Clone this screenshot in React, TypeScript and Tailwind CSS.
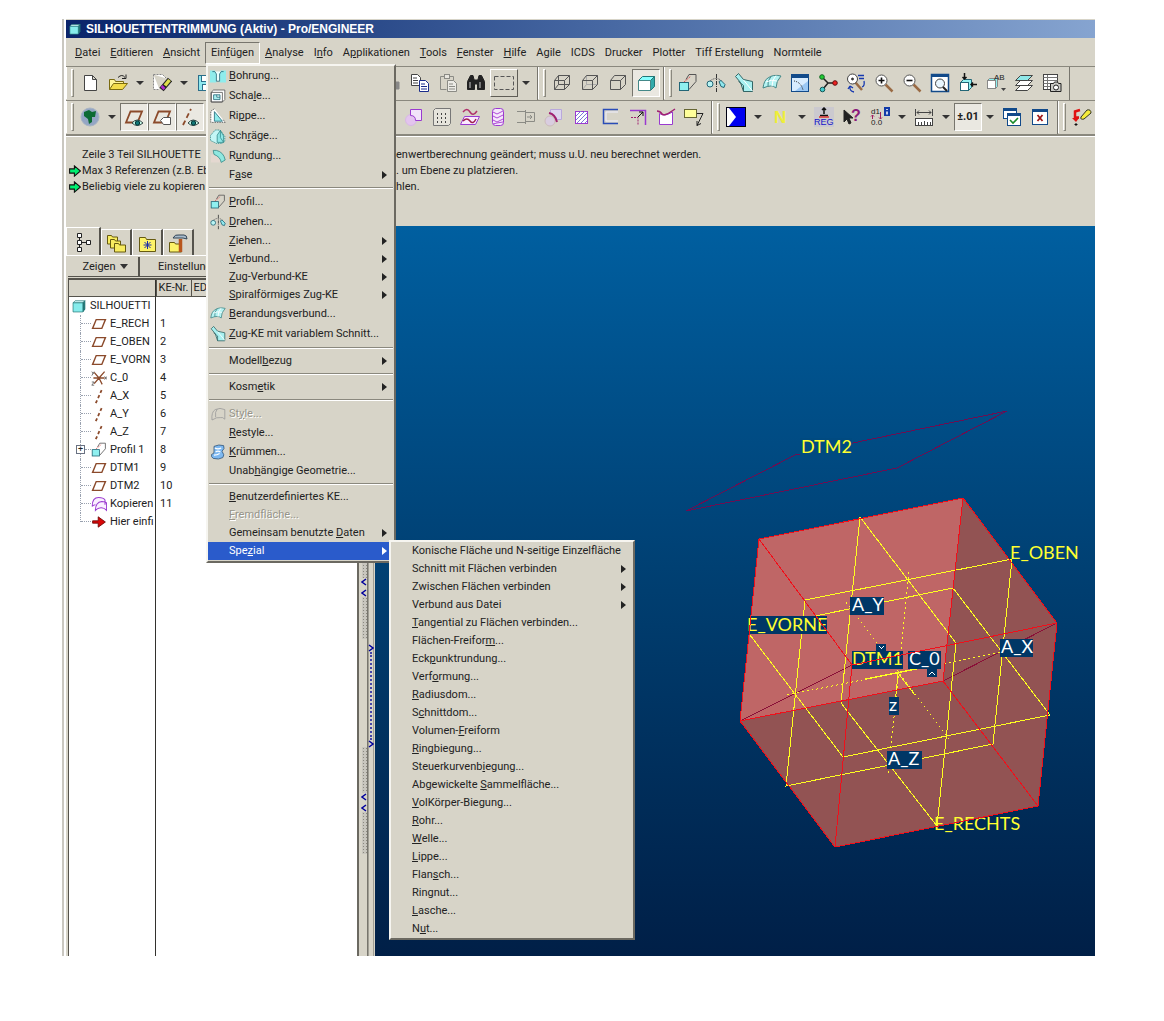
import React from "react";
import clsx from "clsx";

type IconProps = { size?: number; children: React.ReactNode };

function Svg({ size = 20, children }: IconProps) {
  return (
    <svg
      width={size}
      height={size}
      viewBox="0 0 20 20"
      fill="none"
      stroke="#444"
      strokeWidth="1"
      className="shrink-0"
      aria-hidden="true"
    >
      {children}
    </svg>
  );
}

const plane = <path d="M6.5 4.5H18L13.5 15.5H2Z" stroke="#8b4a2b" strokeWidth="1.8" />;
const eye = (
  <>
    <path d="M8 16q5-6 11 0q-6 5-11 0z" fill="#cfe" stroke="#344" />
    <circle cx="13.5" cy="16" r="2.2" fill="#177" stroke="#033" />
  </>
);
const lens = (
  <>
    <path d="M11.5 11.5L18.5 18.5" stroke="#9a6b45" strokeWidth="2.5" />
    <circle cx="7.5" cy="7.5" r="5.5" fill="#fff" stroke="#555" />
  </>
);

const icons: Record<string, React.ReactNode> = {
  file: <path d="M4.5 2.5h8l4 4v11h-12zM12.5 2.5v4h4" fill="#fff" />,
  open: (
    <>
      <path d="M1.5 16.5v-10h5l1 2h8v3" fill="#fff59a" stroke="#7a6a10" />
      <path d="M1.5 16.5l4-6h14l-5 6z" fill="#f3dc4b" stroke="#7a6a10" />
      <path d="M10 4.5q4-4 7 0M18 1.5v4h-4" stroke="#222" />
    </>
  ),
  erase: (
    <>
      <path d="M1.5 1.5h9l4 4M1.5 1.5v15h6" fill="#fff" stroke="#888" strokeDasharray="2 1" />
      <path d="M9.5 16.5L18 6.5" stroke="#222" strokeWidth="5.5" />
      <path d="M13 12.5L17.5 7" stroke="#dfe04a" strokeWidth="3.5" />
      <path d="M10 15.5L12 13.5" stroke="#b02bd0" strokeWidth="4" />
    </>
  ),
  save: (
    <>
      <rect x="2.5" y="2.5" width="15" height="15" fill="#8fe8ee" stroke="#2c6f8a" />
      <rect x="5.5" y="2.5" width="9" height="6" fill="#fff" stroke="#2c6f8a" />
      <rect x="6.5" y="11.5" width="8" height="6" fill="#fff" stroke="#2c6f8a" />
    </>
  ),
  undo: <path d="M17 9v7h-7l3-2L9 9z" fill="#888" stroke="#888" />,
  copy: (
    <>
      <path d="M1.5 1.5h6l3 3v8h-9z" fill="#fff" />
      <path d="M3 5h4M3 7.5h5M3 10h5" />
      <path d="M9.5 7.5h6l3 3v8h-9z" fill="#fff" stroke="#1a2c8a" />
      <path d="M11 11h4M11 13.5h6M11 16h6" stroke="#1a2c8a" />
    </>
  ),
  paste: (
    <g stroke="#8b8b85">
      <path d="M2.5 3.5h13v4M2.5 3.5v13h6" />
      <rect x="6.5" y="1.5" width="5" height="4" fill="#e8e6df" />
      <path d="M9.5 7.5h6l3 3v8h-9z" fill="#ecebe6" />
      <path d="M11 11h4M11 13.5h6M11 16h6" />
    </g>
  ),
  find: (
    <g fill="#222" stroke="#222">
      <path d="M4.5 2.5h2.5l1.5 6v8h-7v-8zM13 2.5h2.5l3 6v8h-7v-8z" />
      <path d="M8 7h4v4h-4z" />
      <path d="M4 9v6M14 9v6" stroke="#ccc" />
    </g>
  ),
  select: <rect x="0.5" y="3.5" width="19" height="13" strokeDasharray="4 2" stroke="#555" />,
  wire: (
    <>
      <path d="M2.5 7.5h10v9h-10zM2.5 7.5l4-5h11v9l-5 5M12.5 7.5l5-5" stroke="#555" />
      <path d="M6.5 2.5v9h11M6.5 11.5l-4 5" stroke="#555" />
    </>
  ),
  hidden: (
    <>
      <path d="M6.5 2.5v9h11M6.5 11.5l-4 5" stroke="#aaa" />
      <path d="M2.5 7.5h10v9h-10zM2.5 7.5l4-5h11v9l-5 5M12.5 7.5l5-5" stroke="#555" />
    </>
  ),
  nohidden: (
    <path d="M2.5 7.5h10v9h-10zM2.5 7.5l4-5h11v9l-5 5M12.5 7.5l5-5" stroke="#555" />
  ),
  shaded: (
    <>
      <path d="M2.5 7.5l4-4h12l-4 4z" fill="#8ff" stroke="#277" />
      <path d="M14.5 7.5l4-4v10l-4 4z" fill="#3aa" stroke="#277" />
      <path d="M2.5 7.5h12v10h-12z" fill="#fff" stroke="#488" />
    </>
  ),
  extrude: (
    <>
      <path d="M8 6.5l3-5h7v7l-7 8" stroke="#555" />
      <path d="M6 9L13 3" stroke="#d55" strokeDasharray="2 1" />
      <rect x="1.5" y="9.5" width="9" height="8" fill="#8ff0f0" stroke="#267" />
    </>
  ),
  revolve: (
    <>
      <path d="M10.5 1v18" stroke="#333" strokeDasharray="4 1 1 1" />
      <path d="M4 8q6-5 12 0" stroke="#666" strokeDasharray="2 1" />
      <circle cx="4" cy="11" r="3" fill="#b8f4f4" stroke="#267" />
      <path d="M13 8.5l2-1l4 4l-1 3l-3-1z" fill="#8fe8ee" stroke="#267" />
    </>
  ),
  sweep: (
    <>
      <path d="M1.5 3.5l3-3l5 6l9 2v10h-9l-3-9z" fill="#a8f0f0" stroke="#366" />
      <path d="M9.5 18.5v-6l-5-4" stroke="#366" />
      <path d="M9.5 7l9 11" stroke="#fff" />
    </>
  ),
  blend: (
    <>
      <path d="M1 15q1-8 5-10q5-4 13-2q-5 5-5 12q-4-4-13 0z" fill="#b4f3f3" stroke="#488" />
      <path d="M9 3.5q-4 4-3 10" stroke="#488" />
      <path d="M4 9q5-3 11-1M14 2.5q-4 4-4 11" stroke="#fff" />
    </>
  ),
  sketch: (
    <>
      <rect x="1.5" y="1.5" width="17" height="17" fill="#d8ecff" stroke="#124a8a" />
      <rect x="1.5" y="1.5" width="17" height="3" fill="#124a8a" stroke="#124a8a" />
      <path d="M5 18L18 8v10z" fill="#9cc8f4" stroke="none" />
      <path d="M4 8q7 1 9 9" stroke="#222" strokeDasharray="1 1" />
    </>
  ),
  points: (
    <>
      <path d="M4 4l6 6h7M10 10l-5 6" stroke="#222" strokeWidth="1.5" />
      <circle cx="4" cy="4" r="2.3" fill="#2c3" stroke="#162" />
      <circle cx="17" cy="10" r="2.3" fill="#e22" stroke="#611" />
      <circle cx="4.5" cy="16.5" r="2.3" fill="#4cc" stroke="#155" />
    </>
  ),
  spin: (
    <>
      <path d="M9 9l7 8" stroke="#9a6b45" strokeWidth="2.5" />
      <circle cx="6.5" cy="6" r="5" fill="#fff" />
      <circle cx="6.5" cy="6" r="1" fill="#222" />
      <path
        d="M12 2.5h6M13 5.5h5M18 8q1 5-2 6M4 13q-1 5 4 6M4 13l-2 3M4 13l3 2"
        stroke="#1638b0"
        strokeWidth="1.3"
      />
    </>
  ),
  zoomIn: (
    <>
      {lens}
      <path d="M4.5 7.5h6M7.5 4.5v6" stroke="#111" strokeWidth="1.6" />
    </>
  ),
  zoomOut: (
    <>
      {lens}
      <path d="M4.5 7.5h6" stroke="#111" strokeWidth="1.6" />
    </>
  ),
  refit: (
    <>
      <rect x="1.5" y="1.5" width="17" height="17" fill="#fff" stroke="#124a8a" strokeWidth="1.5" />
      <path d="M1 3h18" stroke="#124a8a" strokeWidth="2" />
      <circle cx="10" cy="10.5" r="4.5" fill="#e8f6ff" />
      <path d="M13 14l4 4" stroke="#222" strokeWidth="2" />
    </>
  ),
  orient: (
    <>
      <path d="M2.5 9.5l3-3h8v8l-3 3h-8z" fill="#8ff0f0" stroke="#267" />
      <rect x="2.5" y="9.5" width="8" height="8" fill="#fff" stroke="#267" />
      <path d="M6.5 0v6M4.5 4l2 2l2-2M19 11.5h-6M15 9.5l-2 2l2 2" stroke="#111" strokeWidth="1.5" />
    </>
  ),
  views: (
    <>
      <path d="M1.5 7.5l2-2h8v8l-2 2h-8z" fill="#8ff0f0" stroke="#888" />
      <rect x="1.5" y="7.5" width="8" height="8" fill="#fff" stroke="#888" />
      <path d="M15 15h5l-2.5 3z" fill="#444" stroke="none" />
      <text x="8" y="7" fontSize="8" fontFamily="Liberation Sans, sans-serif" fill="#222" stroke="none">
        AB
      </text>
    </>
  ),
  layers: (
    <>
      <path d="M1.5 17.5l5-5h12l-5 5zM1.5 12.5l5-5h12l-5 5z" fill="#fff" />
      <path d="M1.5 7.5l5-5h12l-5 5z" fill="#8fe8e8" />
    </>
  ),
  manager: (
    <>
      <rect x="1.5" y="1.5" width="14" height="15" fill="#fff" />
      <path d="M1.5 4.5h14M1.5 7.5h14M1.5 10.5h14M1.5 13.5h14M5.5 2v14" stroke="#777" />
      <path d="M8.5 10.5h3l1-1.5h3l1 1.5h2.5v8h-10.5z" fill="#c8c8c4" stroke="#222" />
      <circle cx="14" cy="14.5" r="2.5" fill="#fff" stroke="#222" />
    </>
  ),
  globe: (
    <>
      <circle cx="10" cy="10" r="9" fill="#94a6c4" stroke="#a8b4c4" />
      <path d="M4 5l5-2l3 2l4-1l-1 6l-3 0l0 5l-3 2l-1-5l-4-3z" fill="#0c6b34" stroke="none" />
    </>
  ),
  planeOn: (
    <>
      {plane}
      {eye}
    </>
  ),
  planeTag: (
    <>
      {plane}
      <path d="M8.5 13.5l3-3h7v7h-7z" fill="#fff" stroke="#555" />
    </>
  ),
  axisOn: (
    <>
      <path d="M3 18L11 2" stroke="#8b4a2b" strokeWidth="1.8" strokeDasharray="5 3" />
      {eye}
    </>
  ),
  round: (
    <>
      <circle cx="7" cy="13" r="5.5" fill="#e3c4ee" stroke="#d8b8e4" />
      <path d="M6.5 2.5h11v11h-6q0-5-5-5z" fill="#f2e4fa" stroke="#9a3ad0" />
    </>
  ),
  pattern: (
    <>
      <path d="M1.5 3.5l2-2h15v15l-2 2h-15z" fill="#e6e4dc" stroke="#777" />
      <path d="M5 7h1M9 7h1M13 7h1M5 11h1M9 11h1M13 11h1M5 15h1M9 15h1M13 15h1" strokeWidth="2" />
    </>
  ),
  offset: (
    <>
      <path d="M3 5q4-5 7 0t7-1" stroke="#b0306a" strokeWidth="1.5" />
      <path d="M0.5 17.5l4-8h15l-4 8z" fill="#fbeaff" stroke="#9a3ad0" />
      <path d="M3 14q4-4 7 0t6-2" stroke="#a02050" strokeWidth="1.5" />
    </>
  ),
  coil: (
    <>
      <rect x="4.5" y="1.5" width="11" height="17" rx="3" fill="#f5e6fb" stroke="#9a3ad0" />
      <path d="M5 5l4 2l6-3M5 9l4 2l6-3M5 13l4 2l6-3M5 17l4-1l6-1" stroke="#b04ad8" />
    </>
  ),
  extend: (
    <g stroke="#8b8b85">
      <path d="M1 4.5h8M1 15.5h8M9.5 3v14M9.5 5.5h9v9h-9M11 10h5M14 8l2 2l-2 2" />
    </g>
  ),
  trimRound: (
    <>
      <circle cx="6" cy="14" r="5" fill="#d9cde0" stroke="#cbb" />
      <path d="M6.5 2.5h11v10h-5q0-4-6-5z" fill="#dcd6ee" stroke="#b9a8dc" />
      <path d="M5 6q6 1 8 9" stroke="#a02070" strokeWidth="2" />
    </>
  ),
  hatch: (
    <>
      <rect x="3.5" y="4.5" width="12" height="12" fill="#fff" stroke="#9a3ad0" />
      <path d="M4 9l5-5M4 13l9-9M5 16L15 6M9 16l6-6M13 16l2-2" stroke="#7a7ad8" />
    </>
  ),
  bracket: (
    <>
      <path d="M18 2.5H3.5v14H18" stroke="#2a4cb8" strokeWidth="1.5" />
      <path d="M18 5H6v9h12" stroke="#eef" />
    </>
  ),
  corner: (
    <>
      <path d="M2 3.5h15.5V18" stroke="#9a3ad0" strokeWidth="1.5" />
      <path d="M3 10.5h7v7" strokeDasharray="2 1" stroke="#a02070" />
      <path d="M10 10l5-5M15 9V5h-4" stroke="#111" />
    </>
  ),
  curveBox: (
    <>
      <path d="M3.5 6.5v11h13V5q-5 3-8 3t-5-1.5" stroke="#9a3ad0" fill="#fff" />
      <path d="M1 4q3 0 5 3t13-5" stroke="#a02070" strokeWidth="1.5" />
    </>
  ),
  note: (
    <>
      <rect x="0.5" y="2.5" width="12" height="8" fill="#ffff9a" stroke="#663" />
      <path d="M13 6.5h6l-6 12M13 14v4.5l4-2" stroke="#222" />
    </>
  ),
  flag: (
    <>
      <rect x="0.5" y="0.5" width="19" height="19" fill="#0000f0" stroke="#001" />
      <path d="M1 1h2l7 9l-7 9h-2z" fill="#fff" stroke="none" />
    </>
  ),
  nmark: (
    <text
      x="4"
      y="16"
      fontSize="17"
      fontWeight="bold"
      fontFamily="Liberation Sans, sans-serif"
      fill="#eeee3a"
      stroke="none"
    >
      N
    </text>
  ),
  reg: (
    <>
      <rect width="20" height="20" fill="#cbc9cf" stroke="none" />
      <path d="M10 1v6M8 3l2-2l2 2M6 8.5h8" stroke="#111" strokeWidth="1.5" />
      <path d="M5 10h10" stroke="#d33" strokeWidth="1.5" />
      <text x="0" y="18" fontSize="9" fontFamily="Liberation Sans, sans-serif" fill="#1414c8" stroke="none">
        REG
      </text>
    </>
  ),
  help: (
    <>
      <path d="M2 3v12l3-3l2 5l2-1l-2-5h4z" fill="#222" stroke="#222" />
      <text
        x="9"
        y="14"
        fontSize="16"
        fontWeight="bold"
        fontFamily="Liberation Sans, sans-serif"
        fill="#8a1a7a"
        stroke="none"
      >
        ?
      </text>
    </>
  ),
  dims: (
    <>
      <g fontSize="8" fontFamily="Liberation Sans, sans-serif" fill="#222" stroke="none">
        <text x="1" y="7">d1</text>
        <text x="1" y="18">0.0</text>
      </g>
      <path d="M2.5 12V8M1 9.5l1.5-1.5l1.5 1.5M10.5 5v7M9 10.5l1.5 1.5l1.5-1.5" stroke="#a02060" />
      <rect x="14" y="0" width="6" height="9" fill="#123aa8" stroke="none" />
      <path d="M17 2v1M17 4.5v3" stroke="#fff" strokeWidth="1.5" />
    </>
  ),
  measure: (
    <>
      <path d="M1.5 2v7M18.5 2v7M3 5.5h14M5 3.5l-2 2l2 2M15 3.5l2 2l-2 2" />
      <rect x="1.5" y="11.5" width="17" height="7" fill="#fff" />
      <path d="M4.5 18v-3M7.5 18v-3M10.5 18v-4M13.5 18v-3M16.5 18v-3" />
    </>
  ),
  winOk: (
    <>
      <rect x="1.5" y="1.5" width="13" height="10" fill="#fff" stroke="#124a8a" />
      <path d="M1 3h14" stroke="#124a8a" strokeWidth="2" />
      <rect x="5.5" y="6.5" width="13" height="12" fill="#fff" stroke="#124a8a" />
      <path d="M5 8h14" stroke="#124a8a" strokeWidth="2" />
      <path d="M8 13l3 3l5-5" stroke="#1a8a2a" strokeWidth="1.6" />
    </>
  ),
  winX: (
    <>
      <rect x="2.5" y="2.5" width="15" height="15" fill="#fff" stroke="#124a8a" />
      <path d="M2 4h16" stroke="#124a8a" strokeWidth="2" />
      <path d="M7.5 8l5 6M12.5 8l-5 6" stroke="#a01818" strokeWidth="1.8" />
    </>
  ),
  redline: (
    <>
      <path d="M8 3L3 4.5v6h4" stroke="#e01010" strokeWidth="2.5" />
      <path d="M0 11h7l-3 4z" fill="#e01010" stroke="none" />
      <path d="M4 16v3M2.5 17.5h3" stroke="#111" />
      <path d="M9 10l6-7q4-1 4 3l-7 6q-4 1-3-2z" fill="#f6ec3a" stroke="#332" />
    </>
  ),
  // menu only
  hole: (
    <>
      <path d="M0 3h6l2 3v12H0zM20 3h-6l-2 3v12h8z" fill="#8fecec" stroke="none" />
      <path d="M3 4.5h3l2 3v9h4v-9l2-3h3" stroke="#267" fill="#e8ffff" />
    </>
  ),
  shell: (
    <>
      <path d="M1.5 5.5l3-3h14v12l-3 3h-14z" fill="#fff" stroke="#555" />
      <path d="M15.5 5.5h-14v12h14z" stroke="#555" />
      <path d="M4.5 8.5h8v6h-8zM8.5 8.5v3h4" fill="#a8f0f0" stroke="#267" />
    </>
  ),
  rib: (
    <>
      <path d="M5.5 1L1 4v14h18l-3-4" fill="#fff" stroke="#555" strokeDasharray="2 1" />
      <path d="M5.5 4.5l10 12h-10z" fill="#8fecec" stroke="#267" />
    </>
  ),
  draft: (
    <>
      <path d="M0.5 9.500l6-7h6l6 8v6l-4 3h-6l-8-4z" fill="#c4f6f6" stroke="#388" strokeDasharray="2 1" />
      <path d="M9 18V9l4-6l4 7v8z" fill="#8fe8e8" stroke="#388" />
      <path d="M13 3v9l4 6" stroke="#388" />
    </>
  ),
  fillet: (
    <>
      <path d="M1 8h5q6 2 7 10H1z" fill="#e4d8d0" stroke="none" />
      <path d="M4 3h4q9 2 11 12l-5 3q-1-7-9-10z" fill="#8fe8e0" stroke="#388" />
    </>
  ),
  style: <path d="M2.5 17.5q-1-10 4-13q6-3 12 0v12q-3-3-5-2q-5-1-11 3zM9 4q-3 3-2 10" stroke="#999" />,
  bend: (
    <>
      <path d="M5 3q6-3 12-1q2 4-2 7q4 5 1 8q-5 3-12 1q-3-2-2-5q4-1 3-4z" fill="#7db8f0" stroke="#357" />
      <path d="M6 5q4 2 8 0M7 10q3-2 6 0M5 14q4 0 7-2" stroke="#fff" strokeWidth="1.5" />
    </>
  ),
  // model tree
  part: (
    <>
      <path d="M1.5 5.5l3-3h14l-3 3z" fill="#dff" stroke="#277" />
      <path d="M15.5 5.5l3-3v12l-3 4z" fill="#277" stroke="#277" />
      <path d="M1.5 5.5h14v13h-14z" fill="#86ecec" stroke="#277" />
    </>
  ),
  plane: plane,
  csys: (
    <>
      <path
        d="M10 10L4 3M10 10l7-8M10 10h7M10 10l-6 7M10 10l4 8M10 10H3"
        stroke="#8b4a2b"
        strokeWidth="1.6"
      />
      <path d="M17 8l3 4M20 8l-3 4M1 2l2 3M4 2L1 7M1 15h3l-3 4h3" stroke="#555" />
    </>
  ),
  axis: <path d="M6 19L14 1" stroke="#8b4a2b" strokeWidth="2.2" strokeDasharray="4 3" />,
  quilt: (
    <path
      d="M1.5 13q0-11 8-11q6 0 8 3v6M5.5 18q0-10 8-11q5 0 6 2v9q-3-3-5-3q-5-1-9 3zM1.5 13q2-2 4-2"
      fill="#faf0ff"
      stroke="#9a3ad0"
      strokeWidth="1.3"
    />
  ),
  insert: <path d="M2 8.5h7v-5l9 6.5l-9 6.5v-5H2z" fill="#d80808" stroke="#600" />,
  // tabs
  tree: (
    <path
      d="M4.5 1.5h4v4h-4zM4.5 8.5h4v4h-4zM4.5 15.5h4v4h-4zM13.5 8.5h4v4h-4zM6.5 6v2M6.5 13v2M9 10.5h4"
      stroke="#222"
      fill="#fff"
    />
  ),
  folders: (
    <g fill="#f8ec60" stroke="#665a10">
      <path d="M1.5 2.5h4l1 1.5h5v7h-10z" />
      <path d="M4.5 6.5h4l1 1.5h5v7h-10z" />
      <path d="M8.5 10.5h4l1 1.5h6v7h-11z" />
    </g>
  ),
  favorites: (
    <>
      <path d="M2.5 4.5h6l1 2h9v12h-16z" fill="#fdf36a" stroke="#665a10" />
      <path d="M10.5 8v8M6.5 12h8M7.5 9l6 6M13.5 9l-6 6" stroke="#1a2ca8" />
    </>
  ),
  hammer: (
    <>
      <path d="M1.5 9.5h5l1 1.5h6v8h-12z" fill="#fdf36a" stroke="#665a10" />
      <path d="M12.5 6v13" stroke="#b8561c" strokeWidth="3.5" />
      <path d="M5 5q2-4 6-3h5q3 0 3 4l-4-1H6z" fill="#a9bccb" stroke="#345" />
    </>
  ),
  hint: <path d="M1 6.5h8V1.5l10 8.5l-10 8.5v-5H1z" fill="#00f070" stroke="#111" strokeWidth="1.8" />,
};

// "&" marks the underlined access key
function Label({ text }: { text: string }) {
  const i = text.indexOf("&");
  if (i < 0) return <>{text}</>;
  return (
    <>
      {text.slice(0, i)}
      <span className="underline underline-offset-1">{text[i + 1]}</span>
      {text.slice(i + 2)}
    </>
  );
}

type MenuEntry =
  | "-"
  | { label: string; icon?: string; sub?: boolean; disabled?: boolean; active?: boolean };

const menuBefore = ["&Datei", "&Editieren", "&Ansicht"];
const menuAfter = [
  "&Analyse",
  "I&nfo",
  "A&pplikationen",
  "&Tools",
  "&Fenster",
  "&Hilfe",
  "Agile",
  "ICDS",
  "Drucker",
  "Plotter",
  "Tiff Erstellung",
  "Normteile",
];

const insertMenu: MenuEntry[] = [
  { label: "&Bohrung...", icon: "hole" },
  { label: "Scha&le...", icon: "shell" },
  { label: "Ri&ppe...", icon: "rib" },
  { label: "Sch&räge...", icon: "draft" },
  { label: "R&undung...", icon: "fillet" },
  { label: "F&ase", sub: true },
  "-",
  { label: "&Profil...", icon: "extrude" },
  { label: "&Drehen...", icon: "revolve" },
  { label: "&Ziehen...", sub: true },
  { label: "&Verbund...", sub: true },
  { label: "&Zug-Verbund-KE", sub: true },
  { label: "&Spiralförmiges Zug-KE", sub: true },
  { label: "&Berandungsverbund...", icon: "blend" },
  { label: "&Zug-KE mit variablem Schnitt...", icon: "sweep" },
  "-",
  { label: "Modell&bezug", sub: true },
  "-",
  { label: "Kosm&etik", sub: true },
  "-",
  { label: "St&yle...", icon: "style", disabled: true },
  { label: "&Restyle..." },
  { label: "&Krümmen...", icon: "bend" },
  { label: "Unab&hängige Geometrie..." },
  "-",
  { label: "&Benutzerdefiniertes KE..." },
  { label: "&Fremdfläche...", disabled: true },
  { label: "Gemeinsam benutzte &Daten", sub: true },
  { label: "Spe&zial", sub: true, active: true },
];

const specialMenu: MenuEntry[] = [
  { label: "Konische Fläche und N-seitige Einzelfläche" },
  { label: "Schnitt mit Flächen verbinden", sub: true },
  { label: "Zwischen Flächen verbinden", sub: true },
  { label: "Verbund aus Datei", sub: true },
  { label: "&Tangential zu Flächen verbinden..." },
  { label: "Flächen-Freifor&m..." },
  { label: "Eck&punktrundung..." },
  { label: "Verf&ormung..." },
  { label: "&Radiusdom..." },
  { label: "S&chnittdom..." },
  { label: "Volumen-&Freiform" },
  { label: "&Ringbiegung..." },
  { label: "Steuerkurvenb&iegung..." },
  { label: "Abgewickelte &Sammelfläche..." },
  { label: "&VolKörper-Biegung..." },
  { label: "&Rohr..." },
  { label: "&Welle..." },
  { label: "&Lippe..." },
  { label: "Flan&sch..." },
  { label: "Ringnut..." },
  { label: "&Lasche..." },
  { label: "N&ut..." },
];

type MenuProps = { items: MenuEntry[]; className: string; children?: React.ReactNode };

function Menu({ items, className, children }: MenuProps) {
  return (
    <ul
      className={clsx(
        "absolute border-2 border-t-[#f6f5f0] border-r-[#6b6961] border-b-[#6b6961] border-l-[#f6f5f0] bg-[#d7d4c8]",
        className
      )}
    >
      {items.map((item, i) =>
        item === "-" ? (
          <li key={i} className="flex h-2 items-center px-px">
            <hr className="h-[2px] w-full border-t border-b border-t-[#8a887e] border-b-white" />
          </li>
        ) : (
          <li key={i} className="relative">
            <button
              type="button"
              disabled={item.disabled}
              className={clsx(
                "flex w-full items-center pr-[7px] pl-[2px] text-left",
                item.icon ? "h-5" : "h-[18px]",
                item.active && "bg-[#2a5bcb] text-white",
                item.disabled && "text-[#96948a] [text-shadow:1px_1px_0_#fff]"
              )}
            >
              <span className="mr-[3px] w-4 shrink-0">
                {item.icon && <Svg size={16}>{icons[item.icon]}</Svg>}
              </span>
              <span className="flex-1 whitespace-nowrap">
                <Label text={item.label} />
              </span>
              {item.sub && (
                <span className="border-y-4 border-l-[5px] border-y-transparent border-l-current" />
              )}
            </button>
            {item.active && children}
          </li>
        )
      )}
    </ul>
  );
}

function Tool({ name, label, look }: { name: string; label: string; look?: "pressed" | "raised" }) {
  return (
    <button
      type="button"
      aria-label={label}
      className={clsx(
        "flex h-7 w-7 shrink-0 items-center justify-center",
        look === "pressed" &&
          "border border-t-[#77756d] border-r-white border-b-white border-l-[#77756d] bg-[#eae8e1]",
        look === "raised" &&
          "border border-t-white border-r-[#5f5d56] border-b-[#5f5d56] border-l-white"
      )}
    >
      <Svg>{icons[name]}</Svg>
    </button>
  );
}

function Arrow() {
  return (
    <button type="button" aria-label="Mehr" className="flex h-7 w-4 shrink-0 items-center justify-center">
      <span className="border-x-4 border-t-4 border-x-transparent border-t-[#333]" />
    </button>
  );
}

function ToolGroup({ children, open }: { children: React.ReactNode; open?: boolean }) {
  return (
    <div
      className={clsx(
        "flex h-full shrink-0 items-center pb-px",
        !open && "border-r border-[#77756d] pr-[3px]"
      )}
    >
      <div className="flex h-full w-[10px] shrink-0 items-center border-l border-white pl-1">
        <div className="h-7 w-[3px] border border-t-white border-r-[#8a887e] border-b-[#8a887e] border-l-white" />
      </div>
      {children}
    </div>
  );
}

const messages = [
  {
    hint: false,
    head: "Zeile 3 Teil SILHOUETTE",
    tail: "enwertberechnung geändert; muss u.U. neu berechnet werden.",
  },
  { hint: true, head: "Max 3 Referenzen (z.B. Eb", tail: ". um Ebene zu platzieren." },
  { hint: true, head: "Beliebig viele zu kopieren", tail: "hlen." },
];

const treeRows = [
  { icon: "plane", name: "E_RECH", id: 1 },
  { icon: "plane", name: "E_OBEN", id: 2 },
  { icon: "plane", name: "E_VORN", id: 3 },
  { icon: "csys", name: "C_0", id: 4 },
  { icon: "axis", name: "A_X", id: 5 },
  { icon: "axis", name: "A_Y", id: 6 },
  { icon: "axis", name: "A_Z", id: 7 },
  { icon: "extrude", name: "Profil 1", id: 8, expandable: true },
  { icon: "plane", name: "DTM1", id: 9 },
  { icon: "plane", name: "DTM2", id: 10 },
  { icon: "quilt", name: "Kopieren", id: 11 },
  { icon: "insert", name: "Hier einfi" },
];

const tabs = [
  { icon: "tree", label: "Modellbaum" },
  { icon: "folders", label: "Ordner" },
  { icon: "favorites", label: "Favoriten" },
  { icon: "hammer", label: "Verbindungen" },
];

function Toolbars() {
  return (
    <div className="overflow-hidden border-b-2 border-[#8a887e]">
      <div className="flex h-[34px] items-center border-t border-[#8a887e]">
        <ToolGroup>
          <Tool name="file" label="Neu" />
          <Tool name="open" label="Öffnen" />
          <Arrow />
          <Tool name="erase" label="Löschen" />
          <Arrow />
          <Tool name="save" label="Speichern" />
          <div className="w-[158px] shrink-0" />
          <Tool name="undo" label="Rückgängig" />
          <Tool name="copy" label="Kopieren" />
          <Tool name="paste" label="Einfügen" />
          <Tool name="find" label="Suchen" />
          <Tool name="select" label="Auswahl" look="raised" />
          <Arrow />
        </ToolGroup>
        <ToolGroup>
          <Tool name="wire" label="Drahtmodell" />
          <Tool name="hidden" label="Verdeckte Kanten" />
          <Tool name="nohidden" label="Keine verdeckten Kanten" />
          <Tool name="shaded" label="Schattiert" look="pressed" />
        </ToolGroup>
        <ToolGroup>
          <Tool name="extrude" label="Profil" />
          <Tool name="revolve" label="Drehen" />
          <Tool name="sweep" label="Zug-KE" />
          <Tool name="blend" label="Berandungsverbund" />
          <Tool name="sketch" label="Skizze" />
          <Tool name="points" label="Punkte" />
          <Tool name="spin" label="Drehzentrum" />
          <Tool name="zoomIn" label="Vergrößern" />
          <Tool name="zoomOut" label="Verkleinern" />
          <Tool name="refit" label="Einpassen" />
          <Tool name="orient" label="Orientieren" />
          <Tool name="views" label="Ansichten" />
          <Tool name="layers" label="Layer" />
          <Tool name="manager" label="Ansichtsmanager" />
        </ToolGroup>
      </div>
      <div className="flex h-[34px] items-center border-t border-[#8a887e]">
        <ToolGroup>
          <Tool name="globe" label="Web" />
          <Arrow />
          <Tool name="planeOn" label="Ebenen" look="pressed" />
          <Tool name="planeTag" label="Ebenennamen" look="pressed" />
          <Tool name="axisOn" label="Achsen" look="pressed" />
          <div className="w-[196px] shrink-0" />
          <Tool name="round" label="Verschmelzen" />
          <Tool name="pattern" label="Muster" />
          <Tool name="offset" label="Versatz" />
          <Tool name="coil" label="Aufdicken" />
          <Tool name="extend" label="Verlängern" />
          <Tool name="trimRound" label="Trimmen" />
          <Tool name="hatch" label="Füllen" />
          <Tool name="bracket" label="Verbundvolumen" />
          <Tool name="corner" label="Ecke" />
          <Tool name="curveBox" label="Kurve" />
          <Tool name="note" label="Notiz" />
        </ToolGroup>
        <ToolGroup>
          <Tool name="flag" label="Flagge" />
          <Arrow />
          <Tool name="nmark" label="Norm" />
          <Arrow />
          <Tool name="reg" label="REG" />
          <Tool name="help" label="Kontexthilfe" />
          <Tool name="dims" label="Bemaßungen" />
          <Arrow />
          <Tool name="measure" label="Messen" />
          <Arrow />
          <button
            type="button"
            className="flex h-7 w-7 shrink-0 items-center justify-center border border-t-[#77756d] border-r-white border-b-white border-l-[#77756d] bg-[#eae8e1] font-bold"
          >
            ±.01
          </button>
          <Arrow />
          <Tool name="winOk" label="Fenster aktivieren" />
          <Tool name="winX" label="Fenster schließen" />
        </ToolGroup>
        <ToolGroup open>
          <Tool name="redline" label="Markieren" />
        </ToolGroup>
      </div>
    </div>
  );
}

function ModelTree() {
  return (
    <div className="relative flex-1 overflow-hidden border-t-2 border-l border-[#55534c] bg-white">
      <table className="w-full table-fixed border-collapse">
        <colgroup>
          <col className="w-[87px]" />
          <col className="w-[35px]" />
          <col />
        </colgroup>
        <thead>
          <tr className="h-4 bg-[#d7d4c8] leading-4">
            <th className="border-r border-b border-[#55534c] p-0" />
            <th className="border-r border-b border-[#55534c] p-0 pl-[2px] text-left font-normal whitespace-nowrap">
              KE-Nr.
            </th>
            <th className="border-b border-[#55534c] p-0 pl-[2px] text-left font-normal">ED</th>
          </tr>
        </thead>
        <tbody>
          <tr className="h-[18px]">
            <td className="p-0">
              <div className="flex items-center gap-1 pl-[3px]">
                <Svg size={14}>{icons.part}</Svg>
                <span>SILHOUETTI</span>
              </div>
            </td>
            <td />
            <td />
          </tr>
          {treeRows.map((row, i) => (
            <tr key={row.name} className="h-[18px]">
              <td className="p-0">
                <div className="flex h-[18px] items-center pl-[11px]">
                  <span
                    className={clsx(
                      "shrink-0 self-start border-l border-dotted border-gray-400",
                      i === treeRows.length - 1 ? "h-[9px]" : "h-[18px]"
                    )}
                  />
                  {row.expandable && (
                    <span className="z-1 -ml-[5px] flex h-[9px] w-[9px] shrink-0 items-center justify-center border border-gray-500 bg-white text-[9px] leading-none">
                      +
                    </span>
                  )}
                  <span
                    className={clsx(
                      "shrink-0 border-t border-dotted border-gray-400",
                      row.expandable ? "w-[6px]" : "w-[10px]"
                    )}
                  />
                  <Svg size={16}>{icons[row.icon]}</Svg>
                  <span className="ml-[3px] whitespace-nowrap">{row.name}</span>
                </div>
              </td>
              <td className="p-0 pl-1">{row.id}</td>
              <td />
            </tr>
          ))}
        </tbody>
      </table>
      <div className="absolute inset-y-0 left-[86px] w-px bg-[#33322e]" />
    </div>
  );
}

function Chevron({ dir }: { dir: "left" | "right" }) {
  return (
    <svg
      width="6"
      height="8"
      viewBox="0 0 6 8"
      fill="none"
      stroke="#00009c"
      strokeWidth="1.5"
      className="shrink-0"
      aria-hidden="true"
    >
      <path d={dir === "left" ? "M5 1L1 4L5 7" : "M1 1L5 4L1 7"} />
    </svg>
  );
}

function Grip({ className }: { className?: string }) {
  return (
    <div
      className={clsx(
        "w-[5px] shrink-0 bg-[#c8c6be] bg-[radial-gradient(#8a887e_1px,transparent_1px)] bg-[length:3px_3px]",
        className
      )}
    />
  );
}

function Sash() {
  return (
    <div className="flex w-[18px] shrink-0 border-l-2 border-[#6b6961] bg-[#d7d4c8]">
      <div className="flex w-[9px] flex-col items-end border-r border-[#77756d] pt-[326px]">
        <Grip className="h-[26px]" />
        <Chevron dir="left" />
        <div className="h-[3px]" />
        <Chevron dir="left" />
        <Grip className="h-[42px]" />
        <div className="h-[108px]" />
        <Grip className="h-[46px]" />
        <Chevron dir="left" />
        <div className="h-[3px]" />
        <Chevron dir="left" />
        <Grip className="h-[42px]" />
      </div>
      <div className="flex w-[6px] flex-col items-center border-x border-[#a09e94] pt-[418px]">
        <Chevron dir="right" />
        <div className="h-[88px] border-l-2 border-dotted border-[#4444a8]" />
        <Chevron dir="right" />
      </div>
    </div>
  );
}

const viewLabels = [
  { x: 747, y: 631, text: "E_VORNE", box: [748, 616, 79, 18] },
  { x: 852, y: 611, text: "A_Y", box: [850, 597, 34, 18], white: true },
  { x: 1001, y: 653, text: "A_X", box: [1000, 639, 33, 18], white: true },
  { x: 909, y: 665, text: "C_0", box: [908, 651, 33, 18], white: true },
  { x: 888, y: 765, text: "A_Z", box: [887, 751, 35, 18], white: true },
  { x: 889, y: 711, text: "z", box: [889, 697, 10, 18], white: true },
];

function Viewport() {
  return (
    <div className="flex min-w-0 flex-1 bg-linear-to-b from-[#005fa0] via-[#003e70] to-[#001f47]">
      <svg
        viewBox="375 226 720 730"
        preserveAspectRatio="xMaxYMin meet"
        className="h-full w-full"
        fill="none"
        strokeWidth="1"
        shapeRendering="crispEdges"
        role="img"
        aria-label="Modellansicht"
      >
        <path d="M686 511L795 455L1007 411L897 468Z" stroke="#6a0f52" />
        <rect x="800" y="438" width="52" height="18" fill="#004a80" />

        <path d="M759 539L963 498L943 681L740 721Z" fill="#bf6666" />
        <path d="M963 498L1057 623L1038 806L835 847L740 721L943 681Z" fill="#925353" />

        <path d="M740 721L852 665M943 681L1057 623" stroke="#8a1038" />
        <g stroke="#ffff20">
          <path d="M860 517L956 643L937 826L841 703Z" />
          <path d="M805 600L1012 559L993 744L786 786Z" />
          <path d="M750 635L843 757L1050 715L953 588L805 618" />
          <path d="M865 679L930 666M898 673L915 695M898 673L895 705" />
          <path d="M787 695L1003 652M846 602L950 740M909 572L888 775" strokeDasharray="2 3" />
        </g>

        {viewLabels.map((l) => (
          <rect
            key={l.text}
            x={l.box[0]}
            y={l.box[1]}
            width={l.box[2]}
            height={l.box[3]}
            fill="#003766"
          />
        ))}
        <path d="M852 651h51v18h-51zM876 644h10v8h-10zM927 668h10v9h-10z" fill="#003766" />
        <g fontSize="18" fontFamily="Lato, 'Open Sans', sans-serif" stroke="none" fill="#ffff30">
          {viewLabels.map((l) => (
            <text key={l.text} x={l.x} y={l.y} fill={l.white ? "#ffffff" : "#ffff30"}>
              {l.text}
            </text>
          ))}
          <text x="801" y="453">DTM2</text>
          <text x="852" y="665">DTM1</text>
          <text x="1010" y="559">E_OBEN</text>
          <text x="934" y="830">E_RECHTS</text>
        </g>
        <path d="M929 675l3-3l3 3M879 646l3 3M884 646l-3 3" stroke="#ffffff" />

        <g stroke="#f00f1a">
          <path d="M759 539L963 498L1057 623L1038 806L835 847L740 721Z" />
          <path d="M759 539L852 665L1057 623M852 665L835 847" />
          <path d="M963 498L943 681L740 721M943 681L1038 806" />
        </g>
      </svg>
    </div>
  );
}

export default function App() {
  return (
    <div className="flex min-h-screen flex-col bg-white pt-[19px] pr-[69px] pb-[65px] pl-[62px] font-[Roboto,sans-serif] text-[11px] leading-4 text-[#222]">
      <div className="flex flex-1 flex-col border-l-2 border-[#c9c7c0] bg-[#d7d4c8]">
        <div className="flex flex-1 flex-col border-l-2 border-white">
          <header className="flex h-5 items-center gap-[5px] border-y border-[#d7d4c8] bg-linear-to-r from-[#0a246a] via-[#4465a0] to-[#86a4d0] pl-[3px]">
            <Svg size={12}>{icons.part}</Svg>
            <h1 className="font-['Liberation_Sans',sans-serif] text-xs font-bold whitespace-nowrap text-white">
              SILHOUETTENTRIMMUNG (Aktiv) - Pro/ENGINEER
            </h1>
          </header>

          <nav className="flex h-[27px] items-center pl-1">
            {menuBefore.map((m) => (
              <button key={m} type="button" className="px-[5px] whitespace-nowrap">
                <Label text={m} />
              </button>
            ))}
            <div className="relative z-10">
              <button
                type="button"
                aria-expanded="true"
                className="h-[22px] border border-t-[#77756d] border-r-white border-b-white border-l-[#77756d] px-[5px]"
              >
                <Label text="Ein&fügen" />
              </button>
              <Menu items={insertMenu} className="top-[22px] left-px w-[190px] pb-px">
                <Menu items={specialMenu} className="-top-[2px] left-[181px] w-[246px]" />
              </Menu>
            </div>
            {menuAfter.map((m) => (
              <button key={m} type="button" className="px-[5px] whitespace-nowrap">
                <Label text={m} />
              </button>
            ))}
          </nav>

          <Toolbars />

          <div className="h-[90px] border-t border-white pt-[10px] pl-[3px]">
            {messages.map((m) => (
              <div
                key={m.head}
                className="grid h-4 grid-cols-[13px_314px_1fr] items-center whitespace-nowrap"
              >
                <span>{m.hint && <Svg size={12}>{icons.hint}</Svg>}</span>
                <span>{m.head}</span>
                <span>{m.tail}</span>
              </div>
            ))}
          </div>

          <div className="flex flex-1">
            <aside className="flex w-[291px] shrink-0 flex-col">
              <div className="flex h-[30px] items-end border-b border-white" role="tablist">
                {tabs.map((t, i) => (
                  <button
                    key={t.icon}
                    type="button"
                    role="tab"
                    aria-label={t.label}
                    aria-selected={i === 0}
                    className={clsx(
                      "flex items-center justify-center border-t border-r-2 border-l border-t-white border-r-[#55534c] border-l-white",
                      i === 0 ? "h-7 w-[35px]" : "h-[26px] w-[31px]"
                    )}
                  >
                    <Svg>{icons[t.icon]}</Svg>
                  </button>
                ))}
              </div>
              <div className="flex h-[22px] items-center pl-[2px]">
                <button
                  type="button"
                  className="flex h-5 w-[72px] items-center justify-center gap-1 border-r-2 border-b border-[#55534c] pl-1"
                >
                  Zeigen
                  <span className="border-x-4 border-t-[5px] border-x-transparent border-t-[#333]" />
                </button>
                <button type="button" className="h-5 flex-1 border-b border-[#55534c] pl-[18px] text-left">
                  Einstellung
                </button>
              </div>
              <div className="flex flex-1 pl-[2px]">
                <ModelTree />
              </div>
            </aside>
            <Sash />
            <Viewport />
          </div>
        </div>
      </div>
    </div>
  );
}
